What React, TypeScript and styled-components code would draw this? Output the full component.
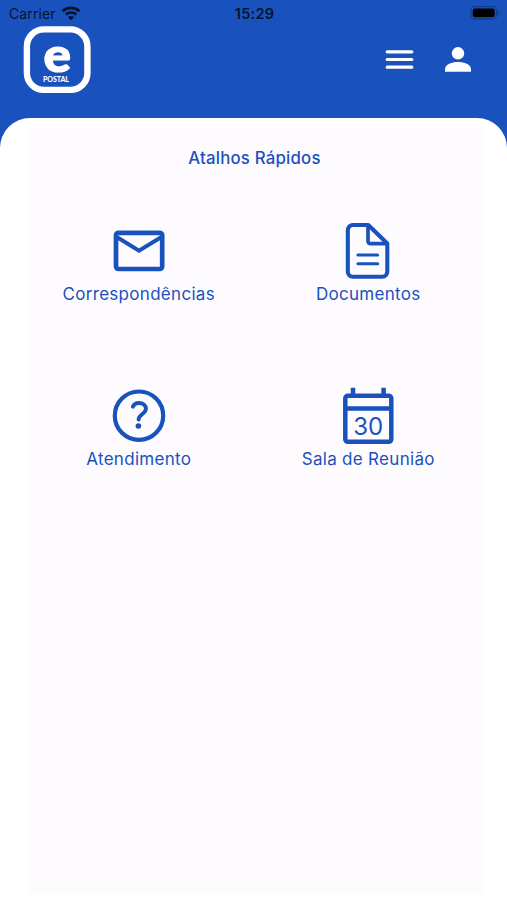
import React from "react";
import styled, { createGlobalStyle } from "styled-components";

const BLUE = "#1a52bd";

const GlobalStyle = createGlobalStyle`
  *, *::before, *::after { box-sizing: border-box; }
  body { margin: 0; background: ${BLUE}; font-family: Inter, "Liberation Sans", sans-serif; }
  svg { display: block; flex: none; }
`;

const Screen = styled.div`
  width: 100%;
  height: 900px;
  display: flex;
  flex-direction: column;
  background: ${BLUE};
  overflow: hidden;
`;

const StatusBar = styled.header`
  height: 26px;
  flex: none;
  display: grid;
  grid-template-columns: 1fr auto 1fr;
  align-items: center;
  padding: 1px 7px 0 9px;
  color: #06132f;
  font-size: 14px;
`;

const Carrier = styled.div`
  display: flex;
  align-items: center;
  gap: 5px;
  letter-spacing: 0.1px;
`;

const Clock = styled.time`
  font-weight: 600;
  font-size: 14.5px;
  letter-spacing: 0.25px;
`;

const Battery = styled.div`
  justify-self: end;
  margin-top: -1px;
`;

const AppBar = styled.nav`
  height: 92px;
  flex: none;
  display: flex;
  align-items: flex-start;
  justify-content: space-between;
  padding: 0 36px 0 23px;
`;

const Actions = styled.div`
  display: flex;
  gap: 31px;
  padding-top: 20px;
`;

const IconButton = styled.button`
  border: 0;
  padding: 0;
  background: none;
  color: #fff;
`;

const Sheet = styled.main`
  flex: 1;
  display: flex;
  padding: 10px 24px 6px 27px;
  background: #fff;
  border-radius: 30px 30px 0 0;
`;

const Panel = styled.section`
  flex: 1;
  background: #fefbff;
  color: ${BLUE};
`;

const Title = styled.h1`
  margin: 20px 1px 0 0;
  text-align: center;
  font-size: 16.8px;
  line-height: 20px;
  font-weight: 500;
  letter-spacing: 0.2px;
`;

const Shortcuts = styled.div`
  margin-top: 53px;
  margin-left: -3px;
  display: grid;
  grid-template-columns: 1fr 1fr;
  grid-auto-rows: 165px;
`;

const Shortcut = styled.a`
  display: flex;
  flex-direction: column;
  align-items: center;
  color: ${BLUE};
`;

const Label = styled.span`
  margin-top: 3px;
  font-size: 17px;
  line-height: 20px;
  letter-spacing: 0.3px;
  white-space: nowrap;
`;

const WifiIcon = () => (
  <svg width="20" height="15" viewBox="0 0 20 15" fill="none" stroke="currentColor">
    <path d="M1.6 5.2C6.3.8 13.7.8 18.4 5.2" strokeWidth="2.7" />
    <path d="M4.7 8.5c3-2.7 7.6-2.7 10.6 0" strokeWidth="2.5" />
    <path d="M10 14.3 6.9 11.2c1.8-1.5 4.4-1.5 6.2 0Z" fill="currentColor" stroke="none" />
  </svg>
);

const BatteryIcon = () => (
  <svg width="30" height="14" viewBox="0 0 30 14">
    <rect x=".8" y=".7" width="25.8" height="12.3" rx="4" fill="none" stroke="#123c8e" strokeWidth="1.3" />
    <rect x="2.7" y="2.5" width="22" height="8.8" rx="2.2" fill="#000" />
    <path d="M28 4.7c1.8.7 1.8 3.7 0 4.4Z" fill="#123c8e" />
  </svg>
);

const Logo = () => (
  <svg width="68" height="68" viewBox="0 0 68 68" fill="#fff">
    <rect x="3.9" y="3.4" width="60.5" height="60.5" rx="17" fill="none" stroke="#fff" strokeWidth="6.4" />
    <text x="34.2" y="46.2" textAnchor="middle" fontFamily="Lato" fontWeight="900" fontSize="48" textLength="27.5" lengthAdjust="spacingAndGlyphs" stroke="#fff" strokeWidth="1.2">e</text>
    <text x="33" y="56" textAnchor="middle" fontFamily="Lato" fontWeight="900" fontSize="7" textLength="26">POSTAL</text>
  </svg>
);

const MenuIcon = () => (
  <svg width="29" height="28" viewBox="0 0 29 28" stroke="#fff" strokeWidth="3.2" strokeLinecap="round">
    <path d="M2.2 5.8h24.6M2.2 13.5h24.6M2.2 21.2h24.6" />
  </svg>
);

const PersonIcon = () => (
  <svg width="26" height="28" viewBox="0 0 26 28" fill="#fff">
    <circle cx="13" cy="7.3" r="6.2" />
    <path d="M0 25.8v-2.6c0-5.3 7-7.3 13-7.3s13 2 13 7.3v2.6Z" />
  </svg>
);

const MailIcon = () => (
  <svg width="60" height="60" viewBox="0 0 60 60" fill="none" stroke="currentColor" strokeWidth="4.7">
    <rect x="7" y="11.8" width="46.2" height="36.2" rx="2.5" />
    <path d="M7.3 15.8 30 29.7l22.9-13.9" strokeWidth="4" />
  </svg>
);

const DocumentIcon = () => (
  <svg width="60" height="60" viewBox="0 0 60 60" fill="none" stroke="currentColor" strokeWidth="4.1" strokeLinecap="round" strokeLinejoin="round">
    <path d="M14.8 4h15.5L49.3 22.5v28.2a5 5 0 0 1-5 5H14.8a5 5 0 0 1-5-5V9a5 5 0 0 1 5-5Z" />
    <path d="M30 5v15.2a2.5 2.5 0 0 0 2.5 2.5h16" strokeWidth="3.7" />
    <path d="M19.9 34h19.8M19.9 42.8h19.8" strokeWidth="3" />
  </svg>
);

const HelpIcon = () => (
  <svg width="60" height="60" viewBox="0 0 60 60" fill="none" stroke="currentColor">
    <circle cx="30" cy="29.7" r="24.2" strokeWidth="4.2" />
    <path d="M23.8 20.6c1.2-2.5 3.2-3.6 6-3.6 4.1 0 7.1 2.2 7.1 5.8 0 5-7.2 5.3-7.3 10.8" strokeWidth="3.9" strokeLinecap="round" />
    <circle cx="29.4" cy="40" r="2.8" fill="currentColor" stroke="none" />
  </svg>
);

const CalendarIcon = () => (
  <svg width="60" height="60" viewBox="0 0 60 60" fill="none" stroke="currentColor" strokeWidth="4.5">
    <rect x="7.3" y="9.8" width="46" height="46" rx="2.5" />
    <path d="M7 22.5h46.5M15 10V1.8M45.6 10V1.8" />
    <text x="30.2" y="48.6" textAnchor="middle" fontFamily="Inter" fontSize="24.5" textLength="30" lengthAdjust="spacingAndGlyphs" fill="currentColor" stroke="none">30</text>
  </svg>
);

const shortcuts = [
  { label: "Correspondências", Icon: MailIcon },
  { label: "Documentos", Icon: DocumentIcon },
  { label: "Atendimento", Icon: HelpIcon },
  { label: "Sala de Reunião", Icon: CalendarIcon },
];

export default function App() {
  return (
    <>
      <GlobalStyle />
      <Screen>
        <StatusBar>
          <Carrier>Carrier<WifiIcon /></Carrier>
          <Clock>15:29</Clock>
          <Battery><BatteryIcon /></Battery>
        </StatusBar>
        <AppBar>
          <Logo />
          <Actions>
            <IconButton aria-label="Menu"><MenuIcon /></IconButton>
            <IconButton aria-label="Perfil"><PersonIcon /></IconButton>
          </Actions>
        </AppBar>
        <Sheet>
          <Panel>
            <Title>Atalhos Rápidos</Title>
            <Shortcuts>
              {shortcuts.map(({ label, Icon }) => (
                <Shortcut key={label}>
                  <Icon />
                  <Label>{label}</Label>
                </Shortcut>
              ))}
            </Shortcuts>
          </Panel>
        </Sheet>
      </Screen>
    </>
  );
}
